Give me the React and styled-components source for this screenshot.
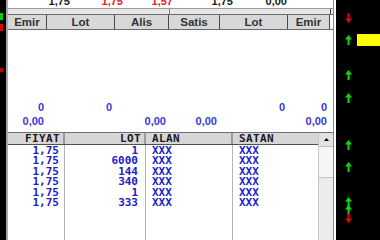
import React from 'react';
import styled, { createGlobalStyle } from 'styled-components';

const GlobalStyle = createGlobalStyle`
  html, body { margin: 0; padding: 0; background: #000; }
`;

const topValues = [
  { w: 62, v: '1,75', red: false },
  { w: 53, v: '1,75', red: true },
  { w: 50, v: '1,57', red: true },
  { w: 60, v: '1,75', red: false },
  { w: 54, v: '0,00', red: false },
];

const upperCols = [
  { w: 39, title: 'Emir' },
  { w: 68, title: 'Lot' },
  { w: 54, title: 'Alis' },
  { w: 51, title: 'Satis' },
  { w: 68, title: 'Lot' },
  { w: 42, title: 'Emir' },
];

const sumRows = [
  ['0', '0', '', '', '0', '0'],
  ['0,00', '', '0,00', '0,00', '', '0,00'],
];

const trades = [
  ['1,75', '1'],
  ['1,75', '6000'],
  ['1,75', '144'],
  ['1,75', '340'],
  ['1,75', '1'],
  ['1,75', '333'],
];

const indicators = [
  { top: 13, dir: 'down' },
  { top: 12, dir: 'up', bar: true },
  { top: 25, dir: 'up' },
  { top: 13, dir: 'up' },
  { top: 37, dir: 'up' },
  { top: 12, dir: 'up' },
  { top: 25, dir: 'up' },
  { top: -2, dir: 'up' },
  { top: -2, dir: 'down' },
];

function Arrow({ dir }) {
  const color = dir === 'up' ? '#00e000' : '#e80000';
  return (
    <svg width="7" height="10" viewBox="0 0 7 10">
      {dir === 'up' ? (
        <path d="M3.5 0 L7 4.5 L4.5 4.5 L4.5 10 L2.5 10 L2.5 4.5 L0 4.5 Z" fill={color} />
      ) : (
        <path d="M3.5 10 L7 5.5 L4.5 5.5 L4.5 0 L2.5 0 L2.5 5.5 L0 5.5 Z" fill={color} />
      )}
    </svg>
  );
}

export default function App() {
  return (
    <>
      <GlobalStyle />
      <Screen>
        <LeftStrip>
          <LeftMark $top={13} $color="#00d000" />
          <LeftMark $top={4} $color="#e00000" />
          <LeftMark $top={37} $color="#c00000" $h={4} />
        </LeftStrip>
        <Main>
          <Inner>
            <UpperPane>
              <TopRow>
                {topValues.map((t, i) => (
                  <TopCell key={i} $w={t.w} $red={t.red}>{t.v}</TopCell>
                ))}
              </TopRow>
              <Band>
                <Tick $left={161} $color="#e05050" />
                <Tick $left={322} $color="#404040" />
              </Band>
              <HeaderRow>
                {upperCols.map((c, i) => (
                  <HeaderCell key={i} $w={c.w}>{c.title}</HeaderCell>
                ))}
              </HeaderRow>
              <UpperBody>
                {sumRows.map((row, r) => (
                  <SumRow key={r}>
                    {row.map((v, i) => (
                      <SumCell key={i} $w={upperCols[i].w}>{v}</SumCell>
                    ))}
                  </SumRow>
                ))}
              </UpperBody>
            </UpperPane>
            <LowerPane>
              <Table>
                <TradeHeader>
                  <THead $w={57} $align="right">FIYAT</THead>
                  <THead $w={81} $align="right">LOT</THead>
                  <THead $w={87} $align="left">ALAN</THead>
                  <THead $w={85} $align="left" $last>SATAN</THead>
                </TradeHeader>
                <TradeBody>
                  <TCol $w={57} $align="right">
                    {trades.map((t, i) => <TLine key={i}>{t[0]}</TLine>)}
                  </TCol>
                  <TCol $w={81} $align="right" $pad={7}>
                    {trades.map((t, i) => <TLine key={i}>{t[1]}</TLine>)}
                  </TCol>
                  <TCol $w={87} $align="left">
                    {trades.map((t, i) => <TLine key={i}>XXX</TLine>)}
                  </TCol>
                  <TCol $w={85} $align="left" $last>
                    {trades.map((t, i) => <TLine key={i}>XXX</TLine>)}
                  </TCol>
                </TradeBody>
              </Table>
              <ScrollBar>
                <ScrollButton>
                  <svg width="5" height="3" viewBox="0 0 5 3">
                    <path d="M2.5 0 L5 3 L0 3 Z" fill="#000" />
                  </svg>
                </ScrollButton>
                <ScrollThumb />
                <ScrollTrack />
              </ScrollBar>
            </LowerPane>
          </Inner>
        </Main>
        <RightPanel>
          {indicators.map((ind, i) => (
            <Indicator key={i} $top={ind.top}>
              <Arrow dir={ind.dir} />
              {ind.bar && <YellowBar />}
            </Indicator>
          ))}
        </RightPanel>
      </Screen>
    </>
  );
}

const Screen = styled.div`
  display: flex;
  width: 380px;
  height: 240px;
  overflow: hidden;
  background: #000;
  font-family: "Liberation Sans", Arial, sans-serif;
`;

const LeftStrip = styled.div`
  display: flex;
  flex-direction: column;
  width: 6px;
  flex-shrink: 0;
  background: #000;
`;

const LeftMark = styled.div`
  width: 3px;
  height: ${(p) => p.$h || 7}px;
  margin-top: ${(p) => p.$top}px;
  background: ${(p) => p.$color};
`;

const Main = styled.div`
  display: flex;
  width: 330px;
  height: 240px;
  flex-shrink: 0;
  box-sizing: border-box;
  border-left: 2px solid #a8a8a8;
  padding-right: 3px;
  background: #fff;
`;

const Inner = styled.div`
  display: flex;
  flex-direction: column;
  flex: 1;
  border-right: 1px solid #8c8c8c;
`;

const UpperPane = styled.div`
  display: flex;
  flex-direction: column;
  height: 132px;
  flex-shrink: 0;
`;

const TopRow = styled.div`
  display: flex;
  align-items: flex-start;
  height: 8px;
  overflow: hidden;
  border-bottom: 1px solid #9c9c9c;
`;

const TopCell = styled.div`
  width: ${(p) => p.$w}px;
  text-align: right;
  font-size: 11px;
  font-weight: bold;
  line-height: 11px;
  margin-top: -4px;
  color: ${(p) => (p.$red ? '#e0202a' : '#1a1a1a')};
`;

const Band = styled.div`
  position: relative;
  height: 5px;
  background: #e6e6e6;
`;

const Tick = styled.div`
  position: absolute;
  top: 0;
  left: ${(p) => p.$left}px;
  width: 1px;
  height: 5px;
  background: ${(p) => p.$color};
`;

const HeaderRow = styled.div`
  display: flex;
  height: 14px;
  border-top: 1px solid #6a6a6a;
  border-bottom: 1px solid #6a6a6a;
`;

const HeaderCell = styled.div`
  width: ${(p) => p.$w}px;
  box-sizing: border-box;
  border-right: 1px solid #4a4a4a;
  background: #d8d8d8;
  text-align: center;
  font-size: 11.5px;
  font-weight: bold;
  line-height: 14px;
  color: #333;
`;

const UpperBody = styled.div`
  display: flex;
  flex-direction: column;
  justify-content: flex-end;
  flex: 1;
  padding-bottom: 4px;
`;

const SumRow = styled.div`
  display: flex;
  height: 14px;
`;

const SumCell = styled.div`
  width: ${(p) => p.$w}px;
  box-sizing: border-box;
  padding-right: 3px;
  text-align: right;
  font-size: 11px;
  font-weight: bold;
  line-height: 14px;
  color: #3838d6;
`;

const LowerPane = styled.div`
  display: flex;
  flex: 1;
  border-top: 1px solid #707070;
`;

const Table = styled.div`
  display: flex;
  flex-direction: column;
  width: 310px;
  font-family: "DejaVu Sans Mono", "Liberation Mono", monospace;
  font-weight: bold;
`;

const TradeHeader = styled.div`
  display: flex;
  height: 11px;
  background: #d6d6d6;
  border-bottom: 1px solid #505050;
`;

const THead = styled.div`
  width: ${(p) => p.$w}px;
  box-sizing: border-box;
  padding: 0 3px 0 ${(p) => (p.$align === 'left' ? 6 : 0)}px;
  border-right: ${(p) => (p.$last ? 'none' : '2px solid #9a9a9a')};
  text-align: ${(p) => p.$align};
  font-size: 11px;
  line-height: 12px;
  letter-spacing: 0.4px;
  color: #1a1a1a;
`;

const TradeBody = styled.div`
  display: flex;
  flex: 1;
`;

const TCol = styled.div`
  width: ${(p) => p.$w}px;
  box-sizing: border-box;
  padding: 1px ${(p) => p.$pad || 5}px 0 ${(p) => (p.$align === 'left' ? 6 : 0)}px;
  border-right: ${(p) => (p.$last ? 'none' : '1px solid #b4b4b4')};
  text-align: ${(p) => p.$align};
  color: #2020c8;
`;

const TLine = styled.div`
  height: 10.4px;
  font-size: 11px;
  line-height: 10.4px;
`;

const ScrollBar = styled.div`
  display: flex;
  flex-direction: column;
  width: 14px;
  background: #ececec;
  border-left: 1px solid #c8c8c8;
`;

const ScrollButton = styled.div`
  display: flex;
  align-items: center;
  justify-content: center;
  height: 13px;
  background: #e2e2e2;
  border-bottom: 1px solid #c0c0c0;
`;

const ScrollThumb = styled.div`
  height: 30px;
  background: #f6f6f6;
  border-bottom: 1px solid #c8c8c8;
`;

const ScrollTrack = styled.div`
  flex: 1;
  background: #ececec;
`;

const RightPanel = styled.div`
  display: flex;
  flex-direction: column;
  flex: 1;
  background: #000;
`;

const Indicator = styled.div`
  display: flex;
  align-items: center;
  gap: 5px;
  height: 10px;
  margin-top: ${(p) => p.$top}px;
  padding-left: 9px;
`;

const YellowBar = styled.div`
  flex: 1;
  height: 12px;
  background: #ffff00;
`;
